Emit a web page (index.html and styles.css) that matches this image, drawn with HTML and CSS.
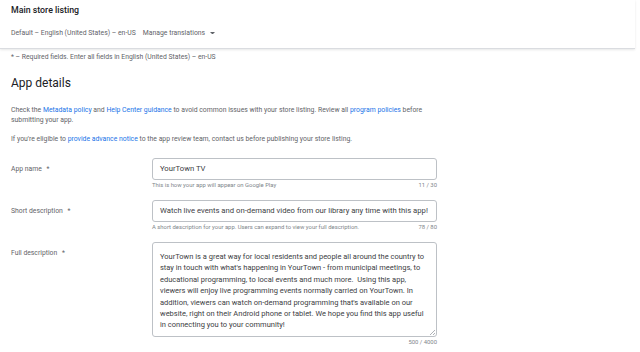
FILE: index.html
```html
<!DOCTYPE html>
<html lang="en">
<head>
<meta charset="UTF-8">
<title>Main store listing</title>
<link rel="stylesheet" href="styles.css">
</head>
<body>

  <header class="topbar">
    <h1 class="topbar-title">Main store listing</h1>
    <div class="lang-row">
      <span class="lang-default">Default – English (United States) – en-US</span>
      <span class="lang-manage">Manage translations
        <svg class="caret" viewBox="0 0 10 5" width="5" height="2.5"><path d="M0 0h10L5 5z" fill="currentColor"/></svg>
      </span>
    </div>
  </header>

  <main class="content">
    <p class="required-note">* – Required fields. Enter all fields in English (United States) – en-US</p>

    <h2 class="section-title">App details</h2>

    <p class="intro">Check the <a href="#">Metadata policy</a> and <a href="#">Help Center guidance</a> to avoid common issues with your store listing. Review all <a href="#">program policies</a> before<br>
      <span>submitting your app.</span></p>
    <p class="intro notice">If you're eligible to <a href="#">provide advance notice</a> to the app review team, contact us before publishing your store listing.</p>

    <div class="form">
      <label class="field-label">App name <span class="req">*</span></label>
      <div class="field">
        <div class="input">YourTown TV</div>
        <div class="field-meta">
          <span>This is how your app will appear on Google Play</span>
          <span>11 / 30</span>
        </div>
      </div>

      <label class="field-label">Short description <span class="req">*</span></label>
      <div class="field">
        <div class="input">Watch live events and on-demand video from our library any time with this app!</div>
        <div class="field-meta">
          <span>A short description for your app. Users can expand to view your full description.</span>
          <span>78 / 80</span>
        </div>
      </div>

      <label class="field-label">Full description <span class="req">*</span></label>
      <div class="field">
        <div class="input textarea">YourTown is a great way for local residents and people all around the country to stay in touch with what's happening in YourTown - from municipal meetings, to educational programming, to local events and much more.&nbsp; Using this app, viewers will enjoy live programming events normally carried on YourTown. In addition, viewers can watch on-demand programming that's available on our website, right on their Android phone or tablet. We hope you find this app useful in connecting you to your community!
          <svg class="grip" viewBox="0 0 6 6" width="6" height="6"><path d="M6 1L1 6M6 4L4 6" stroke="#9aa0a6" stroke-width="0.8"/></svg>
        </div>
        <div class="field-meta">
          <span></span>
          <span>500 / 4000</span>
        </div>
      </div>
    </div>
  </main>

</body>
</html>
```

FILE: styles.css
```css
:root {
  --text: #202124;
  --text2: #3c4043;
  --muted: #5f6368;
  --hint: #80868b;
  --link: #1a73e8;
  --border: #dadce0;
  --input-border: #bdc1c6;
}

* { margin: 0; padding: 0; box-sizing: border-box; }

body {
  background: #fff;
  color: var(--muted);
  font-family: Roboto, "Liberation Sans", sans-serif;
  width: 640px;
  height: 352px;
  overflow: hidden;
}

a { color: var(--link); text-decoration: none; }

/* Top bar */
.topbar {
  height: 49px;
  margin-right: 5px;
  padding: 4px 0 0 11px;
  border-bottom: 1px solid var(--border);
  box-shadow: 0 1px 2px rgba(60, 64, 67, 0.12);
}

.topbar-title {
  font-size: 8.8px;
  line-height: 12px;
  font-weight: 500;
  color: var(--text);
}

.lang-row {
  margin-top: 11px;
  display: flex;
  align-items: center;
  gap: 7px;
  font-size: 6.85px;
  line-height: 12px;
  color: var(--muted);
}

.lang-manage {
  display: flex;
  align-items: center;
  gap: 5px;
}

.caret { color: var(--muted); }

/* Content */
.content {
  padding: 3px 0 0 11px;
  width: 440px;
}

.required-note {
  font-size: 6.8px;
  line-height: 10px;
  color: var(--muted);
}

.section-title {
  margin-top: 12px;
  font-size: 12px;
  line-height: 18px;
  font-weight: 400;
  color: var(--text);
}

.intro {
  margin-top: 13px;
  font-size: 6.85px;
  line-height: 10px;
}

.intro.notice { margin-top: 9px; }

/* Form */
.form {
  margin-top: 14px;
  display: grid;
  grid-template-columns: 141px 285px;
  row-gap: 10px;
}

.field-label {
  font-size: 6.8px;
  line-height: 22px;
}

.req { margin-left: 3px; }

.input {
  height: 22px;
  padding: 0 7px;
  border: 1px solid var(--input-border);
  border-radius: 3px;
  font-size: 7.7px;
  line-height: 20px;
  color: var(--text2);
  white-space: nowrap;
}

.input.textarea {
  position: relative;
  height: 95px;
  padding: 8px 7px;
  font-size: 7.5px;
  line-height: 11.4px;
  white-space: normal;
}

.grip {
  position: absolute;
  right: 1px;
  bottom: 1px;
}

.field-meta {
  display: flex;
  justify-content: space-between;
  font-size: 5.9px;
  line-height: 10px;
  color: var(--hint);
}
```
